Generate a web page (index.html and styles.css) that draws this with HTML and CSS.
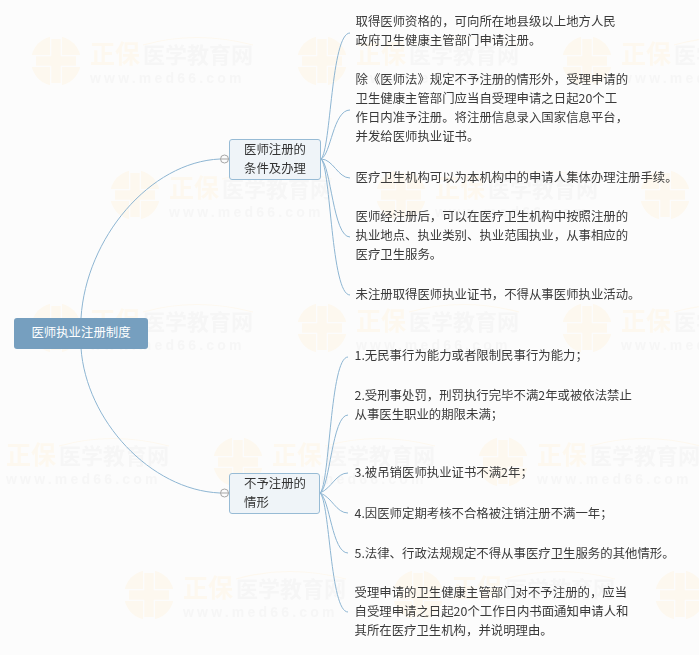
FILE: index.html
```html
<!DOCTYPE html>
<html lang="zh">
<head>
<meta charset="utf-8">
<title>医师执业注册制度</title>
<link rel="stylesheet" href="styles.css">
</head>
<body>
<main class="map">
  <svg class="layer" width="699" height="655" viewBox="0 0 699 655" aria-hidden="true">
    <defs>
      <g id="wm">
        <circle cx="25" cy="25" r="25" fill="#fdf8ef"/>
        <path d="M0 25H50M25 0V50" stroke="#fcfcfc" stroke-width="12"/>
        <path d="M5 25H45M25 3V47" stroke="#fdf8ef" stroke-width="9.500"/>
        <path d="M112 9Q165 -6 222 9" fill="none" stroke="#fdf8ef" stroke-width="1.2"/>
        <text x="59" y="27" class="wm-a">正保</text>
        <text x="112" y="27" class="wm-b">医学教育网</text>
        <text x="59" y="47" class="wm-c">www.med66.com</text>
      </g>
    </defs>
    <use href="#wm" x="31" y="36"/><use href="#wm" x="297" y="36"/><use href="#wm" x="562" y="36"/>
    <use href="#wm" x="110" y="170"/><use href="#wm" x="376" y="170"/><use href="#wm" x="640" y="170"/>
    <use href="#wm" x="31" y="303"/><use href="#wm" x="297" y="303"/><use href="#wm" x="562" y="303"/>
    <use href="#wm" x="-53" y="437"/><use href="#wm" x="213" y="437"/><use href="#wm" x="478" y="437"/>
    <use href="#wm" x="124" y="570"/><use href="#wm" x="393" y="570"/><use href="#wm" x="655" y="570"/>
    <g class="links">
      <path d="M81 318C86 238 150 162 220 159"/>
      <path d="M81 348C86 420 150 490 220 493"/>
      <path d="M321 159C331 150 331 33 350 33"/>
      <path d="M321 159C331 155 333 110 350 110"/>
      <path d="M321 159C333 159 338 178 350 178"/>
      <path d="M321 159C331 165 333 237 350 237"/>
      <path d="M321 159C331 168 331 295 350 295"/>
      <path d="M320 493C330 484 330 357 348 357"/>
      <path d="M320 493C330 488 332 415 348 415"/>
      <path d="M320 493C332 488 336 473 348 473"/>
      <path d="M320 493C332 497 336 513 348 513"/>
      <path d="M320 493C330 499 332 553 348 553"/>
      <path d="M320 493C330 502 330 612 348 612"/>
    </g>
    <g class="fold">
      <circle cx="224.500" cy="159" r="4"/><path d="M220.500 159h8"/>
      <circle cx="224.500" cy="493" r="4"/><path d="M220.500 493h8"/>
    </g>
  </svg>

  <div class="node root">医师执业注册制度</div>
  <div class="node branch branch-a">医师注册的<br>条件及办理</div>
  <div class="node branch branch-b">不予注册的<br>情形</div>

  <p class="leaf l1">取得医师资格的，可向所在地县级以上地方人民<br>政府卫生健康主管部门申请注册。</p>
  <p class="leaf l2">除《医师法》规定不予注册的情形外，受理申请的<br>卫生健康主管部门应当自受理申请之日起20个工<br>作日内准予注册。将注册信息录入国家信息平台，<br>并发给医师执业证书。</p>
  <p class="leaf l3">医疗卫生机构可以为本机构中的申请人集体办理注册手续。</p>
  <p class="leaf l4">医师经注册后，可以在医疗卫生机构中按照注册的<br>执业地点、执业类别、执业范围执业，从事相应的<br>医疗卫生服务。</p>
  <p class="leaf l5">未注册取得医师执业证书，不得从事医师执业活动。</p>
  <p class="leaf lower l6">1.无民事行为能力或者限制民事行为能力；</p>
  <p class="leaf lower l7">2.受刑事处罚，刑罚执行完毕不满2年或被依法禁止<br>从事医生职业的期限未满；</p>
  <p class="leaf lower l8">3.被吊销医师执业证书不满2年；</p>
  <p class="leaf lower l9">4.因医师定期考核不合格被注销注册不满一年；</p>
  <p class="leaf lower l10">5.法律、行政法规规定不得从事医疗卫生服务的其他情形。</p>
  <p class="leaf lower l11">受理申请的卫生健康主管部门对不予注册的，应当<br>自受理申请之日起20个工作日内书面通知申请人和<br>其所在医疗卫生机构，并说明理由。</p>
</main>
</body>
</html>
```
FILE: styles.css
```css
html, body {
  margin: 0;
  padding: 0;
  background: #fcfcfc;
}
.map {
  position: relative;
  width: 699px;
  height: 655px;
  overflow: hidden;
  font-family: "Noto Sans CJK SC", "Liberation Sans", sans-serif;
  font-size: 12.4px;
  line-height: 19px;
  color: #3a3a3a;
  filter: blur(0.3px);
}
.layer {
  position: absolute;
  left: 0;
  top: 0;
}
.wm-a {
  font-size: 25px;
  font-weight: 700;
  fill: #fdf8ef;
}
.wm-b {
  font-size: 22px;
  font-weight: 700;
  fill: #f6f6f6;
}
.wm-c {
  font-family: "Liberation Sans", sans-serif;
  font-size: 14px;
  font-weight: 700;
  letter-spacing: 3.2px;
  fill: #f6f6f6;
}
.links path {
  fill: none;
  stroke: #8db5d2;
  stroke-width: 1;
}
.fold circle {
  fill: #fcfcfc;
  stroke: #a5a5a5;
  stroke-width: 1;
}
.fold path {
  fill: none;
  stroke: #a5a5a5;
  stroke-width: 1;
}
.node {
  position: absolute;
  box-sizing: border-box;
  border-radius: 3px;
}
.root {
  left: 14px;
  top: 318px;
  width: 134px;
  height: 31px;
  background: #769fbf;
  color: #fff;
  text-align: center;
  line-height: 29px;
}
.branch {
  left: 229px;
  height: 41px;
  background: #eff4f8;
  border: 1px solid #97bbd5;
  padding-left: 14px;
  line-height: 18.5px;
  color: #333;
}
.branch-a { top: 139px; width: 92px; }
.branch-b { top: 473px; width: 91px; }
.leaf {
  position: absolute;
  left: 355.5px;
  margin: 0;
  white-space: nowrap;
}
.lower { left: 354.5px; }
.l1 { top: 12px; }
.l2 { top: 70px; }
.l3 { top: 168px; }
.l4 { top: 207px; }
.l5 { top: 285px; }
.l6 { top: 346px; }
.l7 { top: 386px; }
.l8 { top: 463px; }
.l9 { top: 503.500px; }
.l10 { top: 543.500px; }
.l11 { top: 583px; }
```
